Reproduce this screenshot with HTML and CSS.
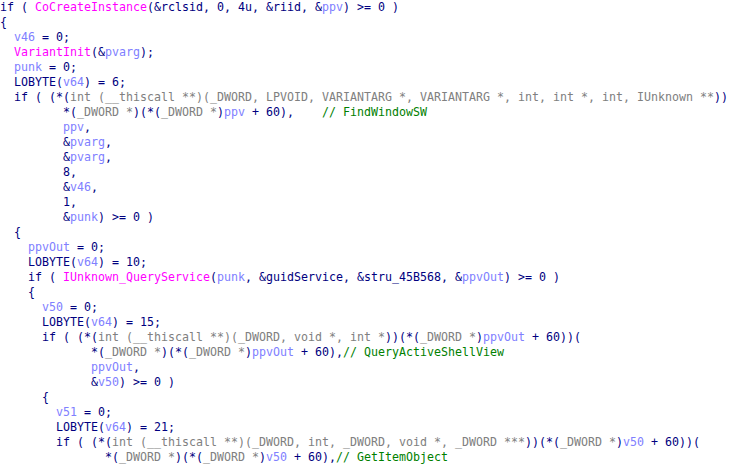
FILE: index.html
```html
<!DOCTYPE html>
<html>
<head>
<meta charset="utf-8">
<link rel="stylesheet" href="styles.css">
</head>
<body>
<pre class="code">if ( <span class="f">CoCreateInstance</span>(&amp;rclsid, 0, 4u, &amp;riid, &amp;<span class="v">ppv</span>) &gt;= 0 )
{
  <span class="v">v46</span> = 0;
  <span class="f">VariantInit</span>(&amp;<span class="v">pvarg</span>);
  <span class="v">punk</span> = 0;
  LOBYTE(<span class="v">v64</span>) = 6;
  if ( (*(<span class="t">int (__thiscall **)(_DWORD, LPVOID, VARIANTARG *, VARIANTARG *, int, int *, int, IUnknown **</span>))
         *(<span class="t">_DWORD *</span>)(*(<span class="t">_DWORD *</span>)<span class="v">ppv</span> + 60),    <span class="c">// FindWindowSW</span>
         <span class="v">ppv</span>,
         &amp;<span class="v">pvarg</span>,
         &amp;<span class="v">pvarg</span>,
         8,
         &amp;<span class="v">v46</span>,
         1,
         &amp;<span class="v">punk</span>) &gt;= 0 )
  {
    <span class="v">ppvOut</span> = 0;
    LOBYTE(<span class="v">v64</span>) = 10;
    if ( <span class="f">IUnknown_QueryService</span>(<span class="v">punk</span>, &amp;guidService, &amp;stru_45B568, &amp;<span class="v">ppvOut</span>) &gt;= 0 )
    {
      <span class="v">v50</span> = 0;
      LOBYTE(<span class="v">v64</span>) = 15;
      if ( (*(<span class="t">int (__thiscall **)(_DWORD, void *, int *</span>))(*(<span class="t">_DWORD *</span>)<span class="v">ppvOut</span> + 60))(
             *(<span class="t">_DWORD *</span>)(*(<span class="t">_DWORD *</span>)<span class="v">ppvOut</span> + 60),<span class="c">// QueryActiveShellView</span>
             <span class="v">ppvOut</span>,
             &amp;<span class="v">v50</span>) &gt;= 0 )
      {
        <span class="v">v51</span> = 0;
        LOBYTE(<span class="v">v64</span>) = 21;
        if ( (*(<span class="t">int (__thiscall **)(_DWORD, int, _DWORD, void *, _DWORD ***</span>))(*(<span class="t">_DWORD *</span>)<span class="v">v50</span> + 60))(
               *(<span class="t">_DWORD *</span>)(*(<span class="t">_DWORD *</span>)<span class="v">v50</span> + 60),<span class="c">// GetItemObject</span>
</pre>
</body>
</html>
```
FILE: styles.css
```css
html, body {
  margin: 0;
  padding: 0;
  background: #ffffff;
}

.code {
  margin: 0;
  padding: 0;
  font-family: "DejaVu Sans Mono", "Liberation Mono", monospace;
  font-size: 11.63px;
  line-height: 15px;
  color: #000080;
  white-space: pre;
  overflow: hidden;
}

.f { color: #ff00ff; }
.v { color: #8080ff; }
.t { color: #808080; }
.c { color: #008000; }
```
